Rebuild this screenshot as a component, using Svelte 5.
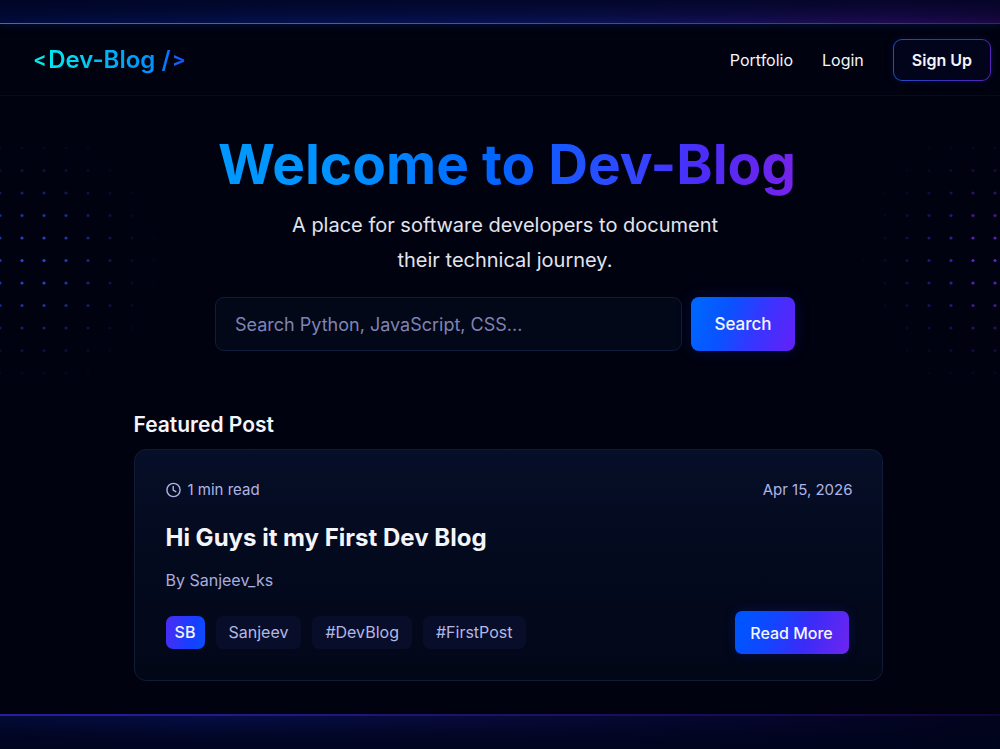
<script>
  const tags = ['Sanjeev', '#DevBlog', '#FirstPost'];
  const PITCH_X = 22;
  const PITCH_Y = 22.5;

  // Dot grid whose opacity fades away from a focal column and row.
  function dotField(cols, rows, focusX, focusY, spreadX, spreadY) {
    const dots = [];
    for (let c = 0; c < cols; c++) {
      for (let r = 0; r < rows; r++) {
        const dx = (c - focusX) / spreadX;
        const dy = (r - focusY) / spreadY;
        const d = dx * dx + dy * dy;
        dots.push({ x: c * PITCH_X + 1, y: r * PITCH_Y + 2, o: Math.exp(-d) });
      }
    }
    return dots;
  }

  const leftDots = dotField(8, 12, 1.5, 5, 3.3, 3.4);
  const rightDots = dotField(8, 12, 6.5, 5, 3.3, 3.4);
  let query = $state('');
</script>

<div class="page">
  <div class="glow glow-top"></div>

  <header>
    <a class="logo" href="#home"><span class="angle">&lt;</span><span class="name">Dev-Blog /</span><span class="angle">&gt;</span></a>
    <nav>
      <a href="#portfolio">Portfolio</a>
      <a href="#login">Login</a>
      <a class="signup" href="#signup">Sign Up</a>
    </nav>
  </header>

  <svg class="dots dots-left" width="160" height="256" viewBox="0 0 160 256" aria-hidden="true">
    {#each leftDots as d}
      <circle cx={d.x} cy={d.y} r="1.6" fill="#2a48d8" opacity={d.o} />
    {/each}
  </svg>
  <svg class="dots dots-right" width="160" height="256" viewBox="0 0 160 256" aria-hidden="true">
    {#each rightDots as d}
      <circle cx={d.x} cy={d.y} r="1.6" fill={d.x > 120 ? '#6322cc' : '#4326c8'} opacity={d.o} />
    {/each}
  </svg>

  <main>
    <section class="hero">
      <h1>Welcome to Dev-Blog</h1>
      <p>A place for software developers to document<br />their technical journey.</p>
      <form onsubmit={(e) => e.preventDefault()}>
        <input type="search" aria-label="Search posts" placeholder="Search Python, JavaScript, CSS..." bind:value={query} />
        <button class="primary search">Search</button>
      </form>
    </section>

    <section class="featured">
      <h2>Featured Post</h2>
      <article>
        <div class="meta">
          <span class="read">
            <svg width="16" height="16" viewBox="0 0 16 16" fill="none" stroke="currentColor" stroke-width="1.4" stroke-linecap="round" stroke-linejoin="round" aria-hidden="true">
              <circle cx="7.5" cy="8" r="6.6" />
              <path d="M7.2 4.4V8.2L9.8 9.7" />
            </svg>
            1 min read
          </span>
          <time datetime="2026-04-15">Apr 15, 2026</time>
        </div>
        <h3>Hi Guys it my First Dev Blog</h3>
        <p class="author">By Sanjeev_ks</p>
        <div class="bottom">
          <div class="tags">
            <span class="avatar">SB</span>
            {#each tags as tag}
              <span class="tag">{tag}</span>
            {/each}
          </div>
          <button class="primary more">Read More</button>
        </div>
      </article>
    </section>
  </main>

  <div class="glow glow-bottom"></div>
</div>

<style>
  :global(body) {
    background: #00020f;
  }

  .page {
    position: relative;
    display: flex;
    flex-direction: column;
    min-height: 100vh;
    overflow: hidden;
    background: #00020f;
    color: #f4f5fa;
    font-family: Inter, 'Liberation Sans', sans-serif;
    font-size: 16px;
  }

  .page * {
    box-sizing: border-box;
  }

  .glow-top {
    height: 24px;
    background:
      linear-gradient(90deg, #0d7fcc, #1273d0 30%, #2a4cd0 60%, #6a1cbe 82%, #4c1390) bottom / 100% 1px no-repeat,
      linear-gradient(180deg, rgba(0, 4, 32, 0.8) 0%, rgba(0, 4, 32, 0.5) 55%, transparent 100%),
      linear-gradient(90deg, #020c40, #041252 30%, #0c1358 60%, #200a56 90%, #1c0746);
    box-shadow: 0 1px 8px rgba(10, 60, 160, 0.3);
  }

  .glow-bottom {
    height: 35px;
    margin-top: auto;
    background:
      linear-gradient(90deg, #2420a0, #241a90 20%, #1c1268 50%, #180a50 80%, #12053a) top / 100% 2px no-repeat,
      linear-gradient(180deg, transparent, rgba(0, 4, 28, 0.7) 60%, rgba(0, 4, 28, 0.9)),
      linear-gradient(90deg, #030b38, #050e48 20%, #080a3c 50%, #05052c 80%, #02031c);
  }

  header {
    display: flex;
    align-items: center;
    justify-content: space-between;
    height: 72px;
    padding: 1px 9px 0 34px;
    border-bottom: 1px solid #080b20;
  }

  a {
    color: inherit;
    text-decoration: none;
  }

  .logo {
    display: flex;
    gap: 2px;
    font-size: 24px;
    font-weight: 600;
    line-height: 32px;
    white-space: nowrap;
    background: linear-gradient(90deg, #00f0e8, #00d8f4 25%, #00a4fa 60%, #0090ff 80%, #1450ff);
    background-clip: text;
    -webkit-background-clip: text;
    color: transparent;
  }

  .angle {
    font-family: Roboto, sans-serif;
    font-weight: 500;
  }

  nav {
    display: flex;
    align-items: center;
    gap: 29px;
  }

  .signup {
    padding: 0 18px;
    line-height: 40px;
    font-weight: 600;
    border: 1px solid transparent;
    border-radius: 9px;
    background:
      linear-gradient(#01041a, #01041a) padding-box,
      linear-gradient(90deg, #1c50c4, #3a30b8 50%, #5a22b8) border-box;
    box-shadow: 0 0 10px rgba(20, 50, 180, 0.2);
  }

  .dots {
    position: absolute;
    top: 146px;
  }

  .dots-left {
    left: -1px;
  }

  .dots-right {
    right: 0;
  }

  main {
    width: 100%;
    max-width: 765px;
    margin: 0 auto;
    padding: 32px 0 32px 16px;
  }

  .hero {
    text-align: center;
    padding-right: 6px;
  }

  h1,
  h2,
  h3,
  p {
    margin: 0;
  }

  h1 {
    padding-left: 4px;
    font-size: 55px;
    font-weight: 700;
    line-height: 72px;
    background: linear-gradient(100deg, #0098ff 14%, #0090ff 30%, #0066ff 48%, #3048ff 66%, #4c2cf8 76%, #7a22e8 90%);
    background-clip: text;
    -webkit-background-clip: text;
    color: transparent;
  }

  .hero p {
    padding-top: 8px;
    font-size: 20px;
    line-height: 35px;
    color: #e2e4ee;
  }

  form {
    display: flex;
    gap: 9px;
    max-width: 580px;
    margin: 19px auto 0;
  }

  input {
    flex: 1;
    min-width: 0;
    height: 54px;
    padding: 0 19px;
    border: 1px solid #121c3c;
    border-radius: 9px;
    background: #020818;
    color: #f4f5fa;
    font: inherit;
    font-size: 18px;
  }

  input::placeholder {
    color: #7f83b4;
    opacity: 1;
  }

  .primary {
    border: 0;
    border-radius: 8px;
    color: #f4f5ff;
    font: inherit;
    font-weight: 500;
    white-space: nowrap;
    cursor: pointer;
  }

  .search {
    width: 104px;
    font-size: 17px;
    background: linear-gradient(110deg, #0064ff 10%, #0a52ff 35%, #3a34ff 65%, #6420f8);
    box-shadow: 0 0 16px rgba(20, 50, 255, 0.2);
  }

  .more {
    width: 114px;
    height: 43px;
    border-radius: 7px;
    background: linear-gradient(110deg, #0054ff 10%, #1444ff 35%, #3a2cf8 62%, #7024f0);
    box-shadow: 0 0 12px rgba(30, 40, 255, 0.2);
  }

  .featured {
    padding-top: 57px;
  }

  h2 {
    font-size: 21px;
    font-weight: 600;
    line-height: 34px;
  }

  article {
    margin-top: 7px;
    padding: 28px 29px 26px 31px;
    border: 1px solid #121a36;
    border-radius: 12px;
    background: linear-gradient(180deg, #060f28, #040a1e 45%, #020718);
  }

  .meta,
  .bottom,
  .tags,
  .read {
    display: flex;
    align-items: center;
  }

  .meta,
  .bottom {
    justify-content: space-between;
  }

  .meta {
    font-size: 15px;
    line-height: 24px;
    color: #b0b4e4;
  }

  .read {
    gap: 6px;
  }

  h3 {
    margin-top: 20px;
    font-size: 24px;
    font-weight: 700;
    line-height: 32px;
  }

  .author {
    margin-top: 14px;
    line-height: 24px;
    color: #a9addf;
  }

  .bottom {
    margin-top: 19px;
    padding-right: 4px;
  }

  .tags {
    gap: 11px;
  }

  .avatar,
  .tag {
    line-height: 33px;
    border-radius: 7px;
    color: #b4b8e6;
  }

  .tag {
    padding: 0 13px;
    background: #080e2a;
  }

  .avatar {
    width: 39px;
    text-align: center;
    font-weight: 500;
    color: #f4f5ff;
    background: linear-gradient(100deg, #4c2cf4, #1440ff 70%, #0a50ff);
  }
</style>
